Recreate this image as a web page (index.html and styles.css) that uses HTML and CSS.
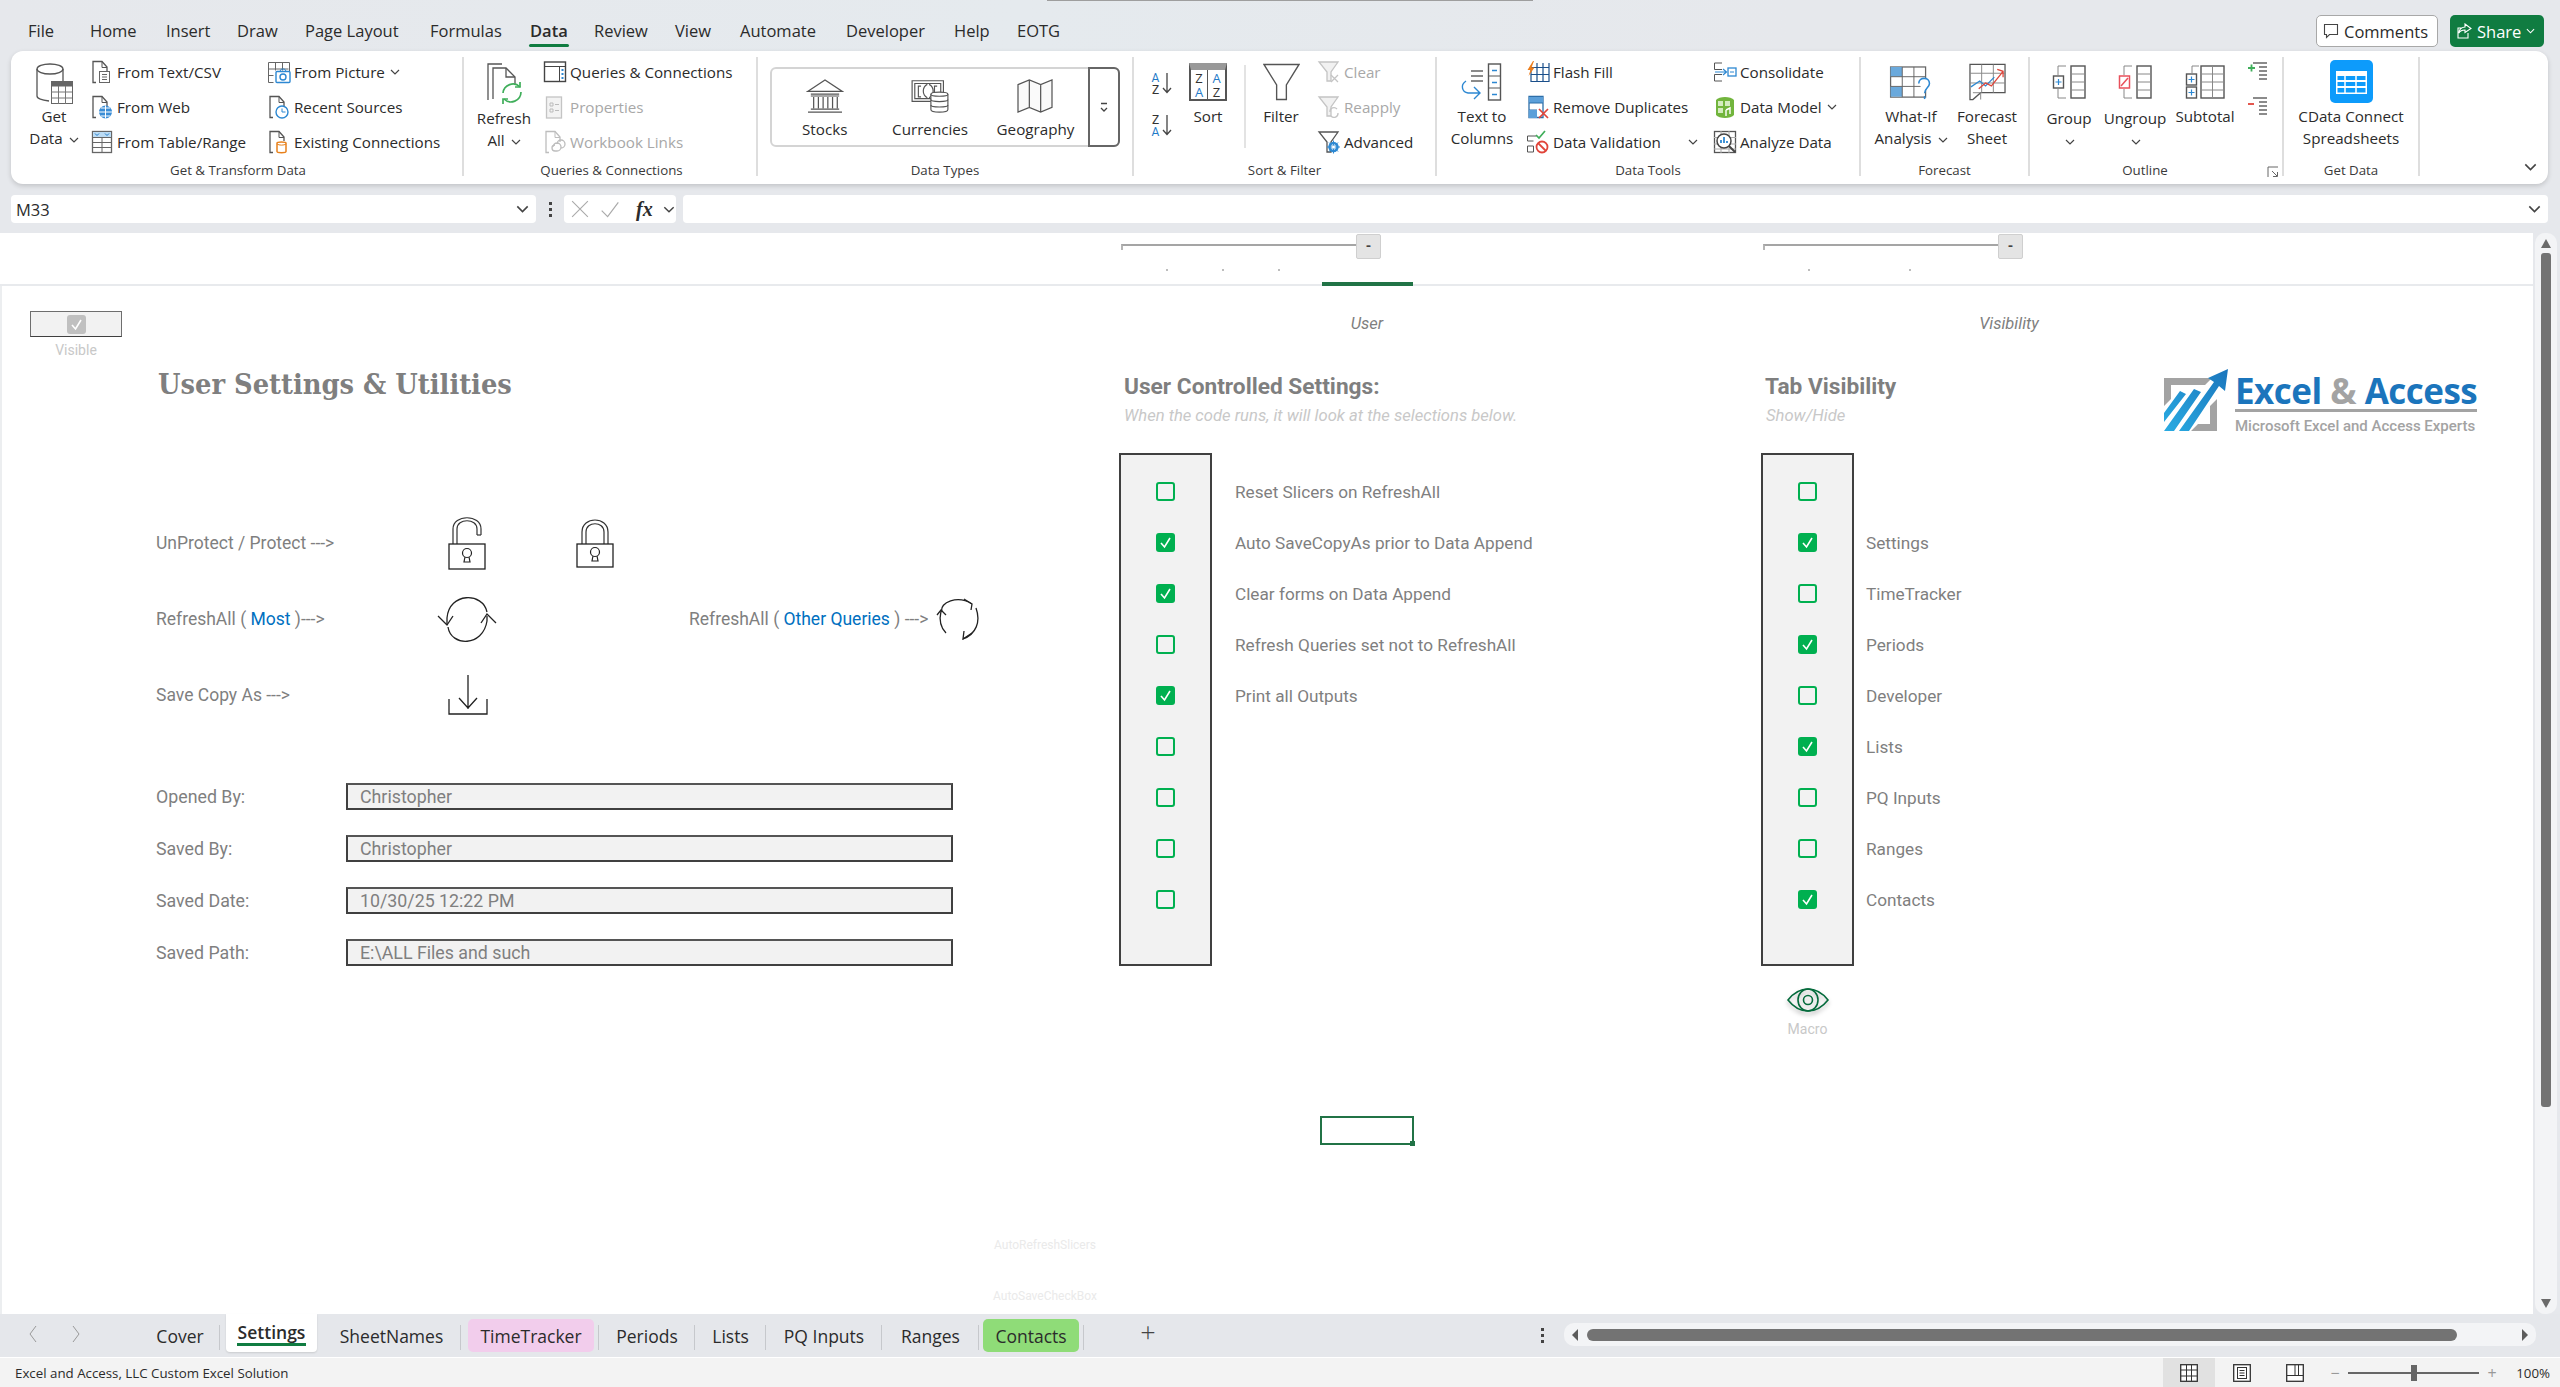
FILE: index.html
```html
<!DOCTYPE html>
<html lang="en">
<head>
<meta charset="utf-8">
<title>Excel - User Settings &amp; Utilities</title>
<link rel="stylesheet" href="styles.css">
</head>
<body>
<svg class="defs" aria-hidden="true">
  <symbol id="chev" viewBox="0 0 10 6"><path d="M1 1l4 4 4-4" fill="none" stroke="#444" stroke-width="1.2"/></symbol>
  <symbol id="chev-w" viewBox="0 0 10 6"><path d="M1 1l4 4 4-4" fill="none" stroke="#fff" stroke-width="1.2"/></symbol>
  <symbol id="db" viewBox="0 0 37 41"><g fill="none" stroke="#555" stroke-width="1.3"><ellipse cx="14" cy="6" rx="13" ry="5" fill="#fff"/><path d="M1 6v27c0 3 5 4 12 5M27 6v12"/></g><rect x="15.5" y="18.5" width="21" height="22" fill="#fff" stroke="#666"/><rect x="15.5" y="18.5" width="21" height="5" fill="#666"/><path d="M15 29h21M15 35h21M22.5 23v18M29.5 23v18" stroke="#777" fill="none"/></symbol>
  <symbol id="doc-text" viewBox="0 0 24 24"><path d="M6 22.5H3V1.500h9l5 5.500v4" fill="none" stroke="#555" stroke-width="1.3"/><path d="M12 1.500v6h5" fill="none" stroke="#555"/><rect x="9.500" y="11.500" width="10" height="11" fill="#fff" stroke="#666"/><path d="M12 14.500h5M12 17h5M12 19.500h5" stroke="#666"/></symbol>
  <symbol id="doc-web" viewBox="0 0 24 24"><path d="M6 22.5H3V1.500h9l5 5.500v4" fill="none" stroke="#555" stroke-width="1.3"/><path d="M12 1.500v6h5" fill="none" stroke="#555"/><circle cx="15.500" cy="17" r="6.500" fill="#3a8dd6"/><path d="M9 17h13M15.500 10.500v13M11 13h9M11 21h9" stroke="#fff" fill="none"/></symbol>
  <symbol id="tbl" viewBox="0 0 24 24"><rect x="2.500" y="1.500" width="19" height="21" fill="#fff" stroke="#666" stroke-width="1.3"/><rect x="3" y="2" width="18" height="5" fill="#bcdcf5"/><path d="M5 3.500l2 2 2-2M15 3.500l2 2 2-2" stroke="#1f7ac8" fill="none"/><path d="M3 7.500h18M3 12.500h18M3 17.500h18M12 7v15" stroke="#666" fill="none"/></symbol>
  <symbol id="pic" viewBox="0 0 24 24"><path d="M1.500 2.500h21v9M1.500 2.500v20h5M8.500 2.500v8M15.500 2.500v8M1.500 9h20M1.500 15.500h5" fill="none" stroke="#666"/><rect x="9" y="11.500" width="14" height="11" rx="1" fill="#fff" stroke="#2d88d2" stroke-width="1.4"/><circle cx="16" cy="17" r="3" fill="none" stroke="#2d88d2" stroke-width="1.4"/><path d="M13 11l1.500-2h3l1.500 2" fill="none" stroke="#2d88d2"/></symbol>
  <symbol id="recent" viewBox="0 0 24 24"><path d="M6 22.5H3V1.500h9l5 5.500v4" fill="none" stroke="#555" stroke-width="1.3"/><path d="M12 1.500v6h5" fill="none" stroke="#555"/><circle cx="15" cy="17" r="6" fill="#fff" stroke="#2d88d2" stroke-width="1.4"/><path d="M15 13.500V17h3.500" fill="none" stroke="#2d88d2"/></symbol>
  <symbol id="exist" viewBox="0 0 24 24"><path d="M6 22.5H3V1.500h9l5 5.500v4" fill="none" stroke="#555" stroke-width="1.3"/><path d="M12 1.500v6h5" fill="none" stroke="#555"/><path d="M10 13c0-1.500 9-1.500 9 0v8.500c0 1.500-9 1.500-9 0z" fill="#fff" stroke="#e8801a" stroke-width="1.5"/><path d="M10 14c2 1.500 7 1.500 9 0" fill="none" stroke="#e8801a"/></symbol>
  <symbol id="refresh-big" viewBox="0 0 37 41"><g fill="none" stroke="#555" stroke-width="1.3"><path d="M2 37V1h14"/><path d="M7 36V5h13l9 9v7"/><path d="M20 5v9h9"/></g><g fill="none" stroke="#3fae5a" stroke-width="1.7"><path d="M17 30a10 10 0 0 1 17-6"/><path d="M35 29a10 10 0 0 1-17 7"/><path d="M29 24h5v-5"/><path d="M22 36h-5v5"/></g></symbol>
  <symbol id="qc" viewBox="0 0 24 24"><rect x="1.500" y="2" width="21" height="19.500" fill="#fff" stroke="#444" stroke-width="1.4"/><path d="M1 6.500h22M16.500 7v14" stroke="#444" fill="none"/><path d="M19.500 9v10" stroke="#2d88d2" stroke-width="2" stroke-dasharray="2 2" fill="none"/></symbol>
  <symbol id="props" viewBox="0 0 24 24"><rect x="3.500" y="2" width="15" height="21" fill="#f3f3f3" stroke="#c4c4c4" stroke-width="1.3"/><path d="M7 8h3v3H7zM7 14h3v3H7zM12 9.500h4M12 15.500h4" fill="none" stroke="#bbb"/></symbol>
  <symbol id="links" viewBox="0 0 24 24"><path d="M6 22.5H3V1.500h9l5 5.500v5" fill="none" stroke="#bdbdbd" stroke-width="1.3"/><path d="M12 1.500v6h5" fill="none" stroke="#bdbdbd"/><path d="M10 17a4 4 0 1 1 4 4h-2a3 3 0 0 1 0-6M14 14a4 4 0 1 1 4 4" fill="none" stroke="#bdbdbd" stroke-width="1.3"/></symbol>
  <symbol id="stocks" viewBox="0 0 38 36"><g fill="none" stroke="#555" stroke-width="1.3"><path d="M1 13L19 1l18 12zM4 16h30M4 18h30M7 19v12M12 19v12M17 19v12M22 19v12M27 19v12M32 19v12M4 32h30M1 35h36"/></g></symbol>
  <symbol id="curr" viewBox="0 0 42 38"><g fill="none" stroke="#555" stroke-width="1.3"><path d="M1 2h35v23H1zM4 5h29v17H4z"/><path d="M11 8H8v12h3M29 8h-3v12h3M18 6c-6 3-6 12 0 15M20 6c6 3 6 12 0 15"/></g><path d="M22 17c0-3 19-3 19 0v17c0 4-19 4-19 0z" fill="#fff" stroke="#555" stroke-width="1.3"/><path d="M22 17c0 3 19 3 19 0M22 23c0 3 19 3 19 0M22 29c0 3 19 3 19 0" fill="none" stroke="#555" stroke-width="1.3"/></symbol>
  <symbol id="geo" viewBox="0 0 38 36"><path d="M1 6l12-5 12 5 12-5v29l-12 5-12-5-12 5zM13 1v29M25 6v29" fill="#fafafa" stroke="#555" stroke-width="1.3"/></symbol>
  <symbol id="down" viewBox="0 0 12 14"><path d="M3 3.500h6M3 8l3 3 3-3" fill="none" stroke="#444" stroke-width="1.3"/></symbol>
  <symbol id="arrowd" viewBox="0 0 10 22"><path d="M5 1v19M1 16l4 4.500L9 16" fill="none" stroke="#444" stroke-width="1.3"/></symbol>
  <symbol id="filter" viewBox="0 0 38 38"><path d="M1 1h36L24 22v15H14V22z" fill="#fff" stroke="#555" stroke-width="1.4"/></symbol>
  <symbol id="f-clear" viewBox="0 0 24 24"><path d="M2 2h19l-7 10v9h-4v-9z" fill="#f1f1f1" stroke="#c4c4c4" stroke-width="1.3"/><path d="M14 15l7 7M21 15l-7 7" stroke="#c4c4c4" stroke-width="1.3"/></symbol>
  <symbol id="f-reapply" viewBox="0 0 24 24"><path d="M2 2h19l-7 10v9h-4v-9z" fill="#f1f1f1" stroke="#c4c4c4" stroke-width="1.3"/><path d="M13 17a4 4 0 0 1 7-3M21 18a4 4 0 0 1-7 3" fill="none" stroke="#c4c4c4" stroke-width="1.3"/></symbol>
  <symbol id="f-adv" viewBox="0 0 24 24"><path d="M2 2h19l-7 10v10h-4V12z" fill="#fff" stroke="#555" stroke-width="1.3"/><circle cx="16.500" cy="17" r="4" fill="#fff" stroke="#2d88d2" stroke-width="2.5"/><path d="M16.500 10.500v13M10 17h13M12 12.500l9 9M21 12.500l-9 9" stroke="#2d88d2"/><circle cx="16.500" cy="17" r="1.500" fill="#fff"/></symbol>
  <symbol id="t2c" viewBox="0 0 44 38"><rect x="28.500" y="1" width="12" height="36" fill="#fff" stroke="#555" stroke-width="1.4"/><path d="M28 13h13M28 25h13" stroke="#555"/><path d="M32 7.500h5M32 19.500h5M32 31.500h5" stroke="#2d88d2" stroke-width="1.4"/><path d="M11 8h12M11 13h12M11 18h12" stroke="#666" stroke-width="1.3"/><path d="M6 18c-6 4-4 11 2 12h12M14 24l6 6-6 6" fill="none" stroke="#2d88d2" stroke-width="1.4"/></symbol>
  <symbol id="flash" viewBox="0 0 24 24"><path d="M5 7.500h18v14H5zM5 14.500h18M11 3v19M17 3v19M23 3v5" fill="none" stroke="#1a4f8a" stroke-width="1.2"/><path d="M7 1L1.500 10h3l-2 6 6-8.500h-3L8 1z" fill="#ed7d1a"/></symbol>
  <symbol id="dup" viewBox="0 0 24 24"><path d="M3 1.500h14v21H3z" fill="#fff" stroke="#2d6ea8" stroke-width="1.3"/><rect x="3" y="2" width="14" height="6" fill="#5b9fd9"/><path d="M3 8h14M3 15h8" stroke="#2d6ea8"/><rect x="3" y="15" width="8" height="8" fill="#5b9fd9"/><path d="M13 14l9 9M22 14l-9 9" stroke="#e0453a" stroke-width="1.7"/></symbol>
  <symbol id="valid" viewBox="0 0 24 24"><path d="M1.500 6h9M1.500 6v5h6M1.500 16h6v6h-6z" fill="none" stroke="#555"/><path d="M10 5l3 3 6-7" fill="none" stroke="#3fae5a" stroke-width="1.7"/><circle cx="16" cy="17" r="5.500" fill="#fff" stroke="#e0453a" stroke-width="1.8"/><path d="M12 13l8 8" stroke="#e0453a" stroke-width="1.8"/></symbol>
  <symbol id="cons" viewBox="0 0 24 24"><path d="M9 3H1.500v6.500H9M9 14.500H1.500V21H9" fill="none" stroke="#555"/><path d="M2 12h11M10 9l3.500 3-3.500 3" fill="none" stroke="#2d88d2" stroke-width="1.2"/><rect x="15" y="8" width="8" height="8" fill="#fff" stroke="#2d88d2" stroke-width="1.3"/><path d="M17 12h4" stroke="#2d88d2"/></symbol>
  <symbol id="model" viewBox="0 0 24 24"><path d="M3 5c3-4 15-4 18 0v15c-3 4-15 4-18 0z" fill="#72b53d"/><path d="M5 6h5v5H5zM12 6h5v5h-5zM5 13h5v5H5z" fill="#d4ecc0"/><path d="M13 15l4-2v6m-4-4v6" stroke="#fff" fill="none" stroke-width="1.4"/></symbol>
  <symbol id="analyze" viewBox="0 0 24 24"><rect x="1.500" y="1.500" width="21" height="21" fill="#fff" stroke="#555" stroke-width="1.3"/><path d="M1 7.500h22M1 14h22M1 19h22M8 1v22M16 1v22" stroke="#aaa"/><circle cx="11" cy="11" r="7" fill="#fff" stroke="#444" stroke-width="1.5"/><path d="M8 13V10M11 13V7M14 13v-2" stroke="#2d88d2" stroke-width="1.8"/><path d="M16 16l6 6" stroke="#444" stroke-width="2"/></symbol>
  <symbol id="whatif" viewBox="0 0 44 36"><rect x="1" y="1" width="36" height="31" fill="#fff" stroke="#666" stroke-width="1.3"/><rect x="1" y="1" width="12" height="10" fill="#6aa9dc"/><rect x="1" y="21" width="12" height="10.500" fill="#6aa9dc"/><path d="M1 11h36M1 21h36M13 1v31M25 1v31" stroke="#666" fill="none"/><path d="M30 18c0-7 11-7 11 0 0 4-5 5-5 10" fill="#fff" stroke="#2d88d2" stroke-width="1.6"/><path d="M36 31v3" stroke="#2d88d2" stroke-width="1.6"/></symbol>
  <symbol id="fsheet" viewBox="0 0 38 38"><path d="M1 1h36v29H12l-8 7H1z" fill="#fff" stroke="#555" stroke-width="1.3"/><path d="M1 10h36M1 20h36M13 1v29M25 1v29M4 30h8v7" stroke="#888" fill="none"/><path d="M2 24l9-6 6 5 9-9" fill="none" stroke="#2d88d2" stroke-width="1.3"/><path d="M10 26l7-6 6 3 12-15M29 6l6 2v6" fill="none" stroke="#e0453a" stroke-width="1.3"/></symbol>
  <symbol id="grp" viewBox="0 0 34 34"><path d="M6 10V1h8M6 24v9h8" fill="none" stroke="#888"/><rect x="1.500" y="11" width="10" height="12" fill="#fff" stroke="#555" stroke-width="1.4"/><path d="M3.500 17h6M6.500 14v6" stroke="#2d88d2" stroke-width="1.2"/><rect x="19" y="1" width="14" height="32" fill="#fff" stroke="#555" stroke-width="1.4"/><path d="M19 9h14M19 17h14M19 25h14" stroke="#888"/></symbol>
  <symbol id="ungrp" viewBox="0 0 34 34"><path d="M6 10V1h8M6 24v9h8" fill="none" stroke="#888"/><rect x="1.500" y="11" width="10" height="12" fill="#fff" stroke="#e8505b" stroke-width="1.5"/><path d="M3 21l7-8" stroke="#e8505b" stroke-width="1.5"/><rect x="19" y="1" width="14" height="32" fill="#fff" stroke="#555" stroke-width="1.4"/><path d="M19 9h14M19 17h14M19 25h14" stroke="#888"/></symbol>
  <symbol id="subt" viewBox="0 0 40 34"><path d="M7 8V1h7" fill="none" stroke="#888"/><rect x="1.500" y="9" width="10" height="11" fill="#fff" stroke="#555" stroke-width="1.4"/><rect x="1.500" y="22" width="10" height="11" fill="#fff" stroke="#555" stroke-width="1.4"/><path d="M3.500 14.500h6M6.500 11.500v6M3.500 27.500h6M6.500 24.500v6" stroke="#2d88d2" stroke-width="1.2"/><rect x="16" y="1" width="23" height="32" fill="#fff" stroke="#555" stroke-width="1.4"/><path d="M16 9h23M16 17h23M16 25h23M27.500 1v32" stroke="#888"/></symbol>
  <symbol id="show" viewBox="0 0 24 24"><path d="M7 3h14M13 7h8M13 11h8M13 15h8M13 19h8" stroke="#666" stroke-width="1.4" fill="none"/><path d="M2 8h7M5.500 4.500v7" stroke="#3fae5a" stroke-width="1.8"/></symbol>
  <symbol id="hide" viewBox="0 0 24 24"><path d="M7 3h14M13 7h8M13 11h8M13 15h8M13 19h8" stroke="#666" stroke-width="1.4" fill="none"/><path d="M2 9h6" stroke="#e0453a" stroke-width="1.8"/></symbol>
  <symbol id="launch" viewBox="0 0 12 12"><path d="M1 11V1h10M5 5l5 5M6 10.500h4.500V6" fill="none" stroke="#666"/></symbol>
  <symbol id="cdata" viewBox="0 0 43 43"><rect width="43" height="43" rx="5" fill="#0d9bfb"/><rect x="6" y="11" width="31" height="23" fill="#fff"/><path d="M7.500 16h28v4h-28zM7.500 22h28v4h-28zM7.500 28h28v4.500h-28z" fill="#0d9bfb"/><path d="M15 11v23M26 11v23" stroke="#fff" stroke-width="1.5"/></symbol>
  <symbol id="lock-open" viewBox="0 0 38 53"><path d="M5 27V12C5 -3 33 -3 33 12v6M9 27V12C9 1 29 1 29 12v6" fill="none" stroke="#333" stroke-width="1.2"/><path d="M29 18h4" stroke="#333" stroke-width="1.2"/><rect x="1" y="27" width="36" height="25" fill="#fff" stroke="#222" stroke-width="1.3"/><circle cx="19" cy="36" r="4.500" fill="none" stroke="#222" stroke-width="1.2"/><path d="M17 40l-1 5h6l-1-5" fill="none" stroke="#222" stroke-width="1.2"/></symbol>
  <symbol id="lock-closed" viewBox="0 0 38 49"><path d="M6 25V13C6 -3 32 -3 32 13v12M10 25V13C10 2 28 2 28 13v12" fill="none" stroke="#333" stroke-width="1.2"/><rect x="1" y="25" width="36" height="23" fill="#fff" stroke="#222" stroke-width="1.3"/><circle cx="19" cy="33" r="4.500" fill="none" stroke="#222" stroke-width="1.2"/><path d="M17 37l-1 5h6l-1-5" fill="none" stroke="#222" stroke-width="1.2"/></symbol>
  <symbol id="sync-a" viewBox="0 0 60 45"><g fill="none" stroke="#222" stroke-width="1.3"><path d="M10 27V21C12 -5 46 -5 50 15"/><path d="M50 19v5C46 50 14 50 11 30"/><path d="M1 19l9 9 6-9M44 26l6-9 9 9"/></g></symbol>
  <symbol id="sync-b" viewBox="0 0 43 42"><g fill="none" stroke="#222" stroke-width="1.3"><path d="M6 14C3 4 22 -3 36 6"/><path d="M28 1l8 5-1 6"/><path d="M5 13C3 22 5 30 10 35"/><path d="M1 17l4-5 5 5"/><path d="M40 10c5 14 0 26-13 31"/><path d="M36 35l-9 6 1-8"/></g></symbol>
  <symbol id="save" viewBox="0 0 40 40"><path d="M20 0v34M11 23l9 10 9-10M1 24v15h38V24" fill="none" stroke="#222" stroke-width="1.3"/></symbol>
  <symbol id="eye" viewBox="0 0 42 24"><g fill="none" stroke="#056b3c" stroke-width="1.6"><path d="M1 12C8 3 15 1 21 1s13 2 20 11c-7 9-14 11-20 11S8 21 1 12z"/><ellipse cx="21" cy="12" rx="10" ry="11"/><circle cx="21" cy="12" r="4.500"/></g></symbol>
  <symbol id="tick" viewBox="0 0 19 19"><path d="M5 10l3.500 4L14 5" fill="none" stroke="#fff" stroke-width="1.6"/></symbol>
  <symbol id="logo-mark" viewBox="0 0 64 62"><defs><linearGradient id="lg" x1="0" y1="1" x2="1" y2="0"><stop offset="0" stop-color="#29abe2"/><stop offset="1" stop-color="#1b75bc"/></linearGradient></defs><path d="M0 9h48l-7 7H7v14l-7 7zM53 30v32H27l7-7h12V37z" fill="#a3a3a3"/><path d="M0 44l16-22 6 3L0 53zM0 62L30 20l7 3L10 62zM15 62L50 13l-6-4 20-9-3 22-6-5L25 62z" fill="url(#lg)"/></symbol>
  <symbol id="normal" viewBox="0 0 18 18"><rect x=".7" y=".7" width="16.600" height="16.600" fill="#fff" stroke="#333" stroke-width="1.3"/><path d="M1 6h16M1 12h16M6.500 1v16M11.500 1v16" stroke="#333"/></symbol>
  <symbol id="pagev" viewBox="0 0 18 18"><rect x=".7" y=".7" width="16.600" height="16.600" fill="#fff" stroke="#333" stroke-width="1.3"/><rect x="4.500" y="3.500" width="9" height="11" fill="none" stroke="#333"/><path d="M6.500 6.500h5M6.500 9h5M6.500 11.500h5" stroke="#333"/></symbol>
  <symbol id="breakv" viewBox="0 0 18 18"><rect x=".7" y=".7" width="16.600" height="16.600" fill="#fff" stroke="#333" stroke-width="1.3"/><path d="M1 11.500h16M9 1v10.500M12.500 1v10.500" stroke="#333"/></symbol>
</svg>

<div class="app">
  <header class="top">
    <div class="search-edge"></div>
    <nav class="menu">
      <span>File</span><span>Home</span><span>Insert</span><span>Draw</span><span>Page Layout</span><span>Formulas</span><span class="on">Data</span><span>Review</span><span>View</span><span>Automate</span><span>Developer</span><span>Help</span><span>EOTG</span>
    </nav>
    <div class="actions">
      <div class="btn-comments"><svg class="bubble" viewBox="0 0 16 16"><path d="M1.500 1.500h13v10h-8l-3 3v-3h-2z" fill="none" stroke="#444" stroke-width="1.1"/></svg>Comments</div>
      <div class="btn-share"><svg class="bubble" viewBox="0 0 16 16"><path d="M9 1l6 4.500L9 9.500V7c-3 0-5 1-6 3 0-3 2-5.500 6-6zM12 10v5H2V5h4" fill="none" stroke="#fff" stroke-width="1.1"/></svg>Share<svg class="chev-s"><use href="#chev-w"/></svg></div>
    </div>
  </header>

  <section class="ribbon">
    <div class="group g1">
      <div class="gbody">
        <div class="big w50"><svg class="bi w37"><use href="#db"/></svg><span>Get</span><span>Data <svg class="cv"><use href="#chev"/></svg></span></div>
        <div class="smalls c177 ml11">
          <div class="si"><svg class="ic"><use href="#doc-text"/></svg>From Text/CSV</div>
          <div class="si"><svg class="ic"><use href="#doc-web"/></svg>From Web</div>
          <div class="si"><svg class="ic"><use href="#tbl"/></svg>From Table/Range</div>
        </div>
        <div class="smalls">
          <div class="si"><svg class="ic"><use href="#pic"/></svg>From Picture <svg class="cv"><use href="#chev"/></svg></div>
          <div class="si"><svg class="ic"><use href="#recent"/></svg>Recent Sources</div>
          <div class="si"><svg class="ic"><use href="#exist"/></svg>Existing Connections</div>
        </div>
      </div>
      <div class="glabel">Get &amp; Transform Data</div>
    </div>

    <div class="group g2">
      <div class="gbody">
        <div class="big w60 lo"><svg class="bi w37"><use href="#refresh-big"/></svg><span>Refresh</span><span>All <svg class="cv"><use href="#chev"/></svg></span></div>
        <div class="smalls ml9">
          <div class="si"><svg class="ic"><use href="#qc"/></svg>Queries &amp; Connections</div>
          <div class="si off"><svg class="ic"><use href="#props"/></svg>Properties</div>
          <div class="si off"><svg class="ic"><use href="#links"/></svg>Workbook Links</div>
        </div>
      </div>
      <div class="glabel">Queries &amp; Connections</div>
    </div>

    <div class="group g3">
      <div class="gbody">
        <div class="dtypes">
          <div class="dt"><svg class="dti w38"><use href="#stocks"/></svg>Stocks</div>
          <div class="dt"><svg class="dti w42"><use href="#curr"/></svg>Currencies</div>
          <div class="dt"><svg class="dti w38"><use href="#geo"/></svg>Geography</div>
          <div class="dt-more"><svg class="down"><use href="#down"/></svg></div>
        </div>
      </div>
      <div class="glabel">Data Types</div>
    </div>

    <div class="group g4">
      <div class="gbody">
        <div class="azs">
          <div class="az"><span class="azl"><b>A</b><i>Z</i></span><svg class="arrowd"><use href="#arrowd"/></svg></div>
          <div class="az"><span class="azl"><i>Z</i><b>A</b></span><svg class="arrowd"><use href="#arrowd"/></svg></div>
        </div>
        <div class="big w60 ml5">
          <div class="sorticon"><span class="sc"><i>Z</i><b>A</b></span><span class="sc"><b>A</b><i>Z</i></span></div>
          <span>Sort</span>
        </div>
        <div class="vsep"></div>
        <div class="big w60 ml5"><svg class="bi w37"><use href="#filter"/></svg><span>Filter</span></div>
        <div class="smalls ml6">
          <div class="si off"><svg class="ic"><use href="#f-clear"/></svg>Clear</div>
          <div class="si off"><svg class="ic"><use href="#f-reapply"/></svg>Reapply</div>
          <div class="si"><svg class="ic"><use href="#f-adv"/></svg>Advanced</div>
        </div>
      </div>
      <div class="glabel">Sort &amp; Filter</div>
    </div>

    <div class="group g5">
      <div class="gbody">
        <div class="big w76"><svg class="bi w44"><use href="#t2c"/></svg><span>Text to</span><span>Columns</span></div>
        <div class="smalls c187 ml6">
          <div class="si"><svg class="ic"><use href="#flash"/></svg>Flash Fill</div>
          <div class="si"><svg class="ic"><use href="#dup"/></svg>Remove Duplicates</div>
          <div class="si"><svg class="ic"><use href="#valid"/></svg>Data Validation<svg class="cv ml24"><use href="#chev"/></svg></div>
        </div>
        <div class="smalls">
          <div class="si"><svg class="ic"><use href="#cons"/></svg>Consolidate</div>
          <div class="si"><svg class="ic"><use href="#model"/></svg>Data Model <svg class="cv"><use href="#chev"/></svg></div>
          <div class="si"><svg class="ic"><use href="#analyze"/></svg>Analyze Data</div>
        </div>
      </div>
      <div class="glabel">Data Tools</div>
    </div>

    <div class="group g6">
      <div class="gbody">
        <div class="big w76"><svg class="bi w44 t3"><use href="#whatif"/></svg><span>What-If</span><span>Analysis <svg class="cv"><use href="#chev"/></svg></span></div>
        <div class="big w76"><svg class="bi w37"><use href="#fsheet"/></svg><span>Forecast</span><span>Sheet</span></div>
      </div>
      <div class="glabel">Forecast</div>
    </div>

    <div class="group g7">
      <div class="gbody">
        <div class="big w66 lo"><svg class="bi w34"><use href="#grp"/></svg><span>Group</span><span><svg class="cv"><use href="#chev"/></svg></span></div>
        <div class="big w66 lo"><svg class="bi w34"><use href="#ungrp"/></svg><span>Ungroup</span><span><svg class="cv"><use href="#chev"/></svg></span></div>
        <div class="big w74"><svg class="bi w40"><use href="#subt"/></svg><span>Subtotal</span></div>
        <div class="smalls ml4">
          <div class="si"><svg class="ic"><use href="#show"/></svg></div>
          <div class="si"><svg class="ic"><use href="#hide"/></svg></div>
        </div>
      </div>
      <div class="glabel gl-outline">Outline<svg class="launch"><use href="#launch"/></svg></div>
    </div>

    <div class="group g8">
      <div class="gbody">
        <div class="big full"><svg class="bi w43"><use href="#cdata"/></svg><span>CData Connect</span><span>Spreadsheets</span></div>
      </div>
      <div class="glabel">Get Data</div>
    </div>

    <svg class="collapse"><use href="#chev"/></svg>
  </section>

  <section class="fbar">
    <div class="namebox">M33<svg class="nbc"><use href="#chev"/></svg></div>
    <div class="dots"><i></i><i></i><i></i></div>
    <div class="fxbox">
      <svg class="fx-x" viewBox="0 0 16 16"><path d="M1 1l14 14M15 1L1 15" stroke="#aaa" fill="none"/></svg>
      <svg class="fx-c" viewBox="0 0 16 16"><path d="M1 9l5 5 9-12" stroke="#aaa" fill="none"/></svg>
      <span class="fx">fx</span><svg class="nbc2"><use href="#chev"/></svg>
    </div>
    <div class="finput"><svg class="nbc"><use href="#chev"/></svg></div>
  </section>

  <section class="work">
    <main class="sheet">
      <div class="band">
        <div class="band-col bc1">
          <div class="slicer"><div class="sl-line"></div><div class="sl-handle">-</div></div>
          <div class="ticks t3v"><i></i><i></i><i></i></div>
        </div>
        <div class="band-col bc2">
          <div class="slicer"><div class="sl-line"></div><div class="sl-handle">-</div></div>
          <div class="ticks t2v"><i></i><i></i></div>
        </div>
        <div class="greenbar"></div>
      </div>

      <div class="cols">
        <div class="col-left">
          <div class="visible">
            <div class="vis-box"><span class="vis-check"><svg class="tick"><use href="#tick"/></svg></span></div>
            <div class="vis-label">Visible</div>
          </div>
          <h1 class="title">User Settings &amp; Utilities</h1>
          <div class="actions-grid">
            <div class="txt">UnProtect / Protect ---&gt;</div>
            <svg class="lk lk-o"><use href="#lock-open"/></svg>
            <svg class="lk lk-c"><use href="#lock-closed"/></svg>
            <div></div><div></div>
            <div class="txt">RefreshAll ( <span class="blue">Most</span> )---&gt;</div>
            <svg class="sy-a"><use href="#sync-a"/></svg>
            <div></div>
            <div class="txt">RefreshAll ( <span class="blue">Other Queries</span> ) ---&gt;</div>
            <svg class="sy-b"><use href="#sync-b"/></svg>
            <div class="txt">Save Copy As ---&gt;</div>
            <svg class="sv"><use href="#save"/></svg>
          </div>
          <div class="form">
            <div class="txt">Opened By:</div><div class="field">Christopher</div>
            <div class="txt">Saved By:</div><div class="field">Christopher</div>
            <div class="txt">Saved Date:</div><div class="field">10/30/25 12:22 PM</div>
            <div class="txt">Saved Path:</div><div class="field">E:\ALL Files and such</div>
          </div>
        </div>

        <div class="col-mid">
          <div class="col-cap cap-user">User</div>
          <h2 class="heading">User Controlled Settings:</h2>
          <div class="sub">When the code runs, it will look at the selections below.</div>
          <div class="list">
            <div class="panel">
              <span class="cb"></span><span class="cb on"><svg class="tick"><use href="#tick"/></svg></span><span class="cb on"><svg class="tick"><use href="#tick"/></svg></span><span class="cb"></span><span class="cb on"><svg class="tick"><use href="#tick"/></svg></span><span class="cb"></span><span class="cb"></span><span class="cb"></span><span class="cb"></span>
            </div>
            <div class="labels">
              <div>Reset Slicers on RefreshAll</div>
              <div>Auto SaveCopyAs prior to Data Append</div>
              <div>Clear forms on Data Append</div>
              <div>Refresh Queries set not to RefreshAll</div>
              <div>Print all Outputs</div>
            </div>
          </div>
        </div>

        <div class="col-right">
          <div class="col-right-main">
            <div class="col-cap cap-vis">Visibility</div>
            <h2 class="heading">Tab Visibility</h2>
            <div class="sub">Show/Hide</div>
            <div class="list">
              <div class="panel">
                <span class="cb"></span><span class="cb on"><svg class="tick"><use href="#tick"/></svg></span><span class="cb"></span><span class="cb on"><svg class="tick"><use href="#tick"/></svg></span><span class="cb"></span><span class="cb on"><svg class="tick"><use href="#tick"/></svg></span><span class="cb"></span><span class="cb"></span><span class="cb on"><svg class="tick"><use href="#tick"/></svg></span>
              </div>
              <div class="labels lr">
                <div></div>
                <div>Settings</div>
                <div>TimeTracker</div>
                <div>Periods</div>
                <div>Developer</div>
                <div>Lists</div>
                <div>PQ Inputs</div>
                <div>Ranges</div>
                <div>Contacts</div>
              </div>
            </div>
            <div class="macro">
              <svg class="eye"><use href="#eye"/></svg>
              <div class="macro-label">Macro</div>
            </div>
          </div>
          <div class="logo">
            <svg class="logo-mark"><use href="#logo-mark"/></svg>
            <div class="logo-text">
              <div class="logo-name">Excel <span class="amp">&amp;</span> Access</div>
              <div class="logo-sub">Microsoft Excel and Access Experts</div>
            </div>
          </div>
        </div>
      </div>

      <div class="active-cell"></div>
      <div class="faint f1">AutoRefreshSlicers</div>
      <div class="faint f2">AutoSaveCheckBox</div>
    </main>

    <aside class="vscroll">
      <span class="varrow up"></span>
      <div class="vthumb"></div>
      <span class="varrow dn"></span>
    </aside>
  </section>

  <section class="tabbar">
    <div class="tabnav">
      <svg class="nav" viewBox="0 0 10 18"><path d="M8 1L2 9l6 8" fill="none" stroke="#999"/></svg>
      <svg class="nav" viewBox="0 0 10 18"><path d="M2 1l6 8-6 8" fill="none" stroke="#999"/></svg>
    </div>
    <div class="tabs">
      <div class="stab">Cover</div>
      <div class="stab sel"><span class="seltext">Settings</span></div>
      <div class="stab">SheetNames</div>
      <div class="stab"><span class="chip pink">TimeTracker</span></div>
      <div class="stab">Periods</div>
      <div class="stab">Lists</div>
      <div class="stab">PQ Inputs</div>
      <div class="stab">Ranges</div>
      <div class="stab"><span class="chip green">Contacts</span></div>
    </div>
    <div class="plus">+</div>
    <div class="dots dots-h"><i></i><i></i><i></i></div>
    <div class="hscroll">
      <span class="harrow l"></span>
      <div class="hthumb"></div>
      <span class="harrow r"></span>
    </div>
  </section>

  <footer class="status">
    <div class="status-text">Excel and Access, LLC Custom Excel Solution</div>
    <div class="status-right">
      <div class="view on"><svg class="vw"><use href="#normal"/></svg></div>
      <div class="view"><svg class="vw"><use href="#pagev"/></svg></div>
      <div class="view"><svg class="vw"><use href="#breakv"/></svg></div>
      <span class="zm">−</span>
      <div class="zoomline"><i></i></div>
      <span class="zm p">+</span>
      <span class="zpct">100%</span>
    </div>
  </footer>
</div>
</body>
</html>
```
FILE: styles.css
```css
* { box-sizing: border-box; }
html, body { margin: 0; padding: 0; height: 100%; overflow: hidden; }
body { font-family: "Open Sans", "Noto Sans", sans-serif; color: #2b2b2b; background: #e6e8ec; }
.defs { position: absolute; width: 0; height: 0; }
.app { width: 2560px; height: 1387px; display: flex; flex-direction: column; }

/* top menu */
.top { height: 51px; flex: none; display: flex; align-items: flex-start; justify-content: space-between; position: relative; background: linear-gradient(90deg, #e6e8ec, #e5eaee 40%, #e6e8ec 70%); }
.search-edge { position: absolute; left: 1047px; top: 0; width: 486px; height: 1px; background: #9e9e9e; }
.menu { display: grid; grid-template-columns: 62px 76px 71px 68px 125px 100px 64px 81px 65px 106px 108px 63px auto; margin: 19px 0 0 28px; font-size: 16.5px; line-height: 24px; }
.menu span { position: relative; white-space: nowrap; }
.menu .on { font-weight: 600; }
.menu .on::after { content: ""; position: absolute; left: -1px; top: 25px; width: 40px; height: 3px; background: #107c41; border-radius: 2px; }
.actions { display: flex; gap: 12px; margin: 15px 16px 0 0; font-size: 16.5px; }
.btn-comments, .btn-share { display: flex; align-items: center; height: 32px; border-radius: 5px; white-space: nowrap; }
.btn-comments { width: 122px; padding-left: 6px; background: #fff; border: 1px solid #a8a8a8; gap: 5px; }
.btn-share { width: 94px; padding-left: 6px; background: #107c41; color: #fff; gap: 5px; }
.bubble { width: 16px; height: 16px; flex: none; }
.chev-s { width: 9px; height: 6px; }

/* ribbon */
.ribbon { height: 133px; flex: none; margin: 0 12px 0 11px; padding-top: 6px; background: #fff; border-radius: 12px; box-shadow: 0 2px 5px rgba(0,0,0,.16); display: flex; position: relative; font-size: 15.2px; }
.group { flex: none; height: 119px; border-right: 2px solid #dedede; display: flex; flex-direction: column; }
.g1 { width: 453px; }
.g2 { width: 294px; }
.g3 { width: 376px; }
.g4 { width: 303px; }
.g5 { width: 424px; }
.g6 { width: 169px; }
.g7 { width: 254px; }
.g8 { width: 136px; }
.gbody { height: 104px; flex: none; display: flex; align-items: flex-start; }
.g1 .gbody { padding-left: 18px; }
.g2 .gbody { padding-left: 10px; }
.g3 .gbody { padding: 10px 0 0 11px; }
.g4 .gbody { padding-left: 16px; }
.g5 .gbody { padding-left: 7px; }
.g6 .gbody { padding-left: 12px; }
.g7 .gbody { padding-left: 6px; }
.glabel { height: 20px; flex: none; line-height: 18px; font-size: 13.3px; text-align: center; color: #3a3a3a; position: relative; white-space: nowrap; }
.g1 .glabel, .g2 .glabel { padding-left: 3px; }
.gl-outline { padding-right: 22px; }
.launch { position: absolute; right: 3px; top: 5px; width: 12px; height: 12px; }
.big { flex: none; display: flex; flex-direction: column; align-items: center; padding-top: 6px; line-height: 22px; white-space: nowrap; }
.big > span { display: block; height: 22px; }
.big > svg.bi, .big > .sorticon { height: 38px; margin-bottom: 4px; flex: none; }
.big > svg.t3 { margin-top: 3px; height: 35px; }
.big.lo > svg.bi { margin-bottom: 6px; }
.w37 { width: 37px; }
.w34 { width: 34px; }
.w40 { width: 40px; }
.w43 { width: 43px; }
.w44 { width: 44px; }
.w38 { width: 38px; }
.w42 { width: 42px; }
.g1 .big > svg.bi, .g2 .big > svg.bi { height: 41px; margin-bottom: 1px; }
.g2 .big.lo > svg.bi { margin-bottom: 3px; }
.g8 .big > svg.bi { height: 43px; margin-top: -3px; margin-bottom: 2px; }
.w50 { width: 50px; }
.w60 { width: 60px; }
.w66 { width: 66px; }
.w74 { width: 74px; }
.w76 { width: 76px; }
.full { width: 100%; }
.ml4 { margin-left: 4px; }
.ml5 { margin-left: 5px; }
.ml6 { margin-left: 6px; }
.ml9 { margin-left: 9px; }
.ml11 { margin-left: 11px; }
.c177 { width: 177px; }
.c187 { width: 187px; }
.smalls { flex: none; display: grid; grid-auto-rows: 35px; margin-top: -3px; }
.si { display: flex; align-items: center; gap: 3px; white-space: nowrap; }
.si.off { color: #a8a8a8; }
.ic { width: 24px; height: 24px; flex: none; }
.cv { width: 10px; height: 6px; margin-left: 2px; vertical-align: middle; }
.cv.ml24 { margin-left: 24px; }
.dtypes { width: 350px; height: 80px; display: flex; border: 2px solid #d4d4d4; border-radius: 6px; margin-left: 1px; }
.dt { width: 106px; display: flex; flex-direction: column; align-items: center; white-space: nowrap; line-height: 22px; }
.dti { height: 34px; margin-top: 10px; margin-bottom: 5px; flex: none; }
.dt-more { width: 32px; margin-left: auto; margin-top: -2px; margin-bottom: -2px; margin-right: -2px; border: 2px solid #666; border-radius: 0 6px 6px 0; display: flex; align-items: center; justify-content: center; }
.down { width: 12px; height: 14px; }
.azs { width: 23px; flex: none; display: flex; flex-direction: column; gap: 19px; padding-top: 15px; }
.az { height: 23px; display: flex; gap: 1px; }
.azl { display: flex; flex-direction: column; font-family: Roboto, sans-serif; font-size: 12px; line-height: 12px; width: 11px; text-align: center; }
.azl b, .sc b { font-weight: 400; color: #1f7ac8; font-style: normal; }
.azl i, .sc i { font-style: normal; color: #333; }
.arrowd { width: 10px; height: 22px; }
.sorticon { width: 38px; display: flex; border: 2px solid #555; border-top: 7px solid #999; background: #fff; }
.sc { width: 50%; display: flex; flex-direction: column; align-items: center; font-size: 13px; line-height: 14px; padding-top: 1px; }
.sc:first-child { border-right: 1px solid #555; }
.vsep { width: 2px; height: 83px; background: #e3e3e3; margin: 8px 0 0 6px; flex: none; }
.collapse { position: absolute; right: 11px; top: 112px; width: 13px; height: 8px; }

/* formula bar */
.fbar { height: 28px; flex: none; margin: 11px 12px 10px 11px; display: flex; }
.namebox, .fxbox, .finput { background: #fff; border-radius: 4px; display: flex; align-items: center; }
.namebox { width: 525px; padding: 0 7px 0 5px; justify-content: space-between; font-size: 16.5px; }
.dots { width: 28px; display: flex; flex-direction: column; gap: 3px; align-items: center; justify-content: center; }
.dots i { width: 3px; height: 3px; background: #444; }
.fxbox { width: 112px; padding-left: 7px; gap: 10px; }
.fx-x { width: 18px; height: 18px; }
.fx-c { width: 22px; height: 19px; }
.fx { font-family: "Liberation Serif", serif; font-style: italic; font-weight: 700; font-size: 20px; margin-left: 5px; }
.nbc { width: 13px; height: 8px; }
.nbc2 { width: 12px; height: 7px; }
.finput { flex: 1; margin-left: 7px; justify-content: flex-end; padding-right: 7px; }

/* work */
.work { flex: 1; display: flex; min-height: 0; }
.sheet { width: 2533px; background: #fff; position: relative; font-family: Roboto, "Liberation Sans", sans-serif; color: #7f7f7f; font-size: 17.2px; overflow: hidden; }
.band { height: 53px; display: flex; border-bottom: 2px solid #e8eaed; position: relative; }
.band-col { flex: none; display: flex; flex-direction: column; }
.bc1 { width: 642px; margin-left: 1121px; }
.bc2 { width: 260px; }
.slicer { display: flex; width: 260px; height: 26px; margin-top: 1px; }
.sl-line { width: 235px; height: 6px; margin-top: 10px; border-top: 2px solid #a5a5a5; border-left: 2px solid #b5b5b5; }
.sl-handle { width: 25px; height: 25px; background: #e4e4e4; border: 1px solid #cfcfcf; border-radius: 2px; text-align: center; line-height: 22px; font-size: 14px; font-weight: 700; color: #444; }
.ticks { display: flex; margin-top: 9px; height: 3px; }
.ticks i { width: 2px; height: 2px; background: #bdbdbd; }
.t3v { padding-left: 45px; gap: 54px; }
.t2v { padding-left: 45px; gap: 99px; }
.greenbar { position: absolute; left: 1322px; bottom: -2px; width: 91px; height: 4px; background: #217346; }
.cols { display: flex; height: 1028px; border-left: 2px solid #eceef0; }
.col-left { width: 1117px; flex: none; }
.visible { width: 92px; margin: 25px 0 0 28px; }
.vis-box { height: 26px; background: #f2f2f2; border: 1px solid #6e6e6e; border-bottom-color: #404040; display: flex; align-items: center; justify-content: center; }
.vis-check { width: 19px; height: 19px; background: #c0c0c0; border-radius: 3px; display: block; }
.tick { width: 19px; height: 19px; display: block; }
.vis-label { text-align: center; color: #c8c8c8; font-size: 14px; line-height: 20px; margin-top: 3px; }
.title { margin: 4px 0 0 156px; font-family: "DejaVu Serif Condensed", "DejaVu Serif", "Liberation Serif", serif; font-size: 28.7px; font-weight: 700; line-height: 40px; color: #7f7f7f; white-space: nowrap; }
.actions-grid { margin: 101px 0 0 154px; display: grid; grid-template-columns: 292px 128px 113px 247px 43px; grid-auto-rows: 76px; align-items: center; justify-items: start; font-size: 17.5px; }
.blue { color: #0070c0; }
.txt { white-space: nowrap; }
.lk-o { width: 38px; height: 53px; }
.lk-c { width: 38px; height: 49px; }
.sy-a { width: 60px; height: 45px; margin-left: -11px; }
.sy-b { width: 43px; height: 42px; }
.sv { width: 40px; height: 40px; }
.form { margin: 50px 0 0 154px; display: grid; grid-template-columns: 190px 607px; grid-auto-rows: 27px; row-gap: 25px; align-items: center; font-size: 17.8px; }
.field { height: 27px; background: #f2f2f2; border: 2px solid #404040; border-top-color: #555; padding-left: 12px; line-height: 23px; white-space: nowrap; }
.col-mid { width: 642px; flex: none; }
.col-cap { font-style: italic; line-height: 24px; margin-top: 26px; text-align: center; font-size: 16.5px; }
.cap-user { width: 496px; }
.cap-vis { width: 496px; }
.heading { margin: 36px 0 0 5px; font-size: 22.7px; font-weight: 700; line-height: 30px; color: #7f7f7f; white-space: nowrap; }
.col-right .heading { margin-left: 4px; }
.sub { margin: 3px 0 0 5px; font-style: italic; color: #c8c8c8; line-height: 22px; font-size: 16.6px; white-space: nowrap; }
.list { display: flex; margin-top: 26px; }
.panel { width: 93px; height: 513px; flex: none; background: #f2f2f2; border: 2px solid #404040; padding-top: 11px; display: grid; grid-auto-rows: 51px; justify-items: center; align-items: center; align-content: start; }
.cb { width: 19px; height: 19px; border: 2px solid #00b050; border-radius: 3px; display: block; background: #f2f2f2; }
.cb.on { background: #00b050; border: 0; }
.labels { margin-left: 23px; padding-top: 13px; display: grid; grid-auto-rows: 51px; align-items: center; white-space: nowrap; align-self: flex-start; }
.labels.lr { margin-left: 12px; }
.col-right { flex: 1; display: flex; }
.col-right-main { width: 403px; flex: none; }
.macro { width: 93px; margin-top: 22px; display: flex; flex-direction: column; align-items: center; }
.eye { width: 42px; height: 24px; filter: drop-shadow(0 3px 2px rgba(0,0,0,.28)); }
.macro-label { margin-top: 8px; font-size: 14px; line-height: 18px; color: #c8c8c8; }
.logo { display: flex; gap: 7px; margin-top: 83px; height: 62px; align-items: flex-start; }
.logo-mark { width: 64px; height: 62px; flex: none; }
.logo-text { width: 242px; }
.logo-name { font-family: "Open Sans", sans-serif; font-weight: 700; font-size: 35px; line-height: 38px; margin-top: 3px; color: #1b75bc; white-space: nowrap; border-bottom: 3px solid #a3a3a3; height: 40px; letter-spacing: -.5px; }
.amp { color: #a3a3a3; }
.logo-sub { font-family: Roboto, sans-serif; font-weight: 500; font-size: 15px; line-height: 20px; margin-top: 4px; color: #a3a3a3; white-space: nowrap; }
.active-cell { position: absolute; left: 1320px; top: 883px; width: 94px; height: 29px; border: 2px solid #217346; }
.active-cell::after { content: ""; position: absolute; right: -3px; bottom: -3px; width: 5px; height: 5px; background: #217346; }
.faint { position: absolute; left: 990px; width: 110px; text-align: center; font-size: 12px; color: #eaeaea; white-space: nowrap; }
.f1 { top: 1005px; }
.f2 { top: 1056px; }

/* vertical scroll */
.vscroll { flex: 1; display: flex; flex-direction: column; align-items: center; margin: 0 3px 0 2px; background: #f3f4f6; border-radius: 10px; padding: 6px 0; }
.vthumb { width: 10px; height: 854px; background: #737373; border-radius: 3px; margin-top: 5px; }
.varrow { width: 0; height: 0; border-left: 5px solid transparent; border-right: 5px solid transparent; }
.up { border-bottom: 9px solid #6a6a6a; }
.dn { border-top: 9px solid #6a6a6a; margin-top: auto; }

/* tab bar */
.tabbar { height: 43px; flex: none; display: flex; align-items: flex-start; background: #e5e7eb; }
.tabnav { width: 140px; flex: none; display: flex; gap: 33px; padding: 11px 0 0 28px; }
.nav { width: 10px; height: 18px; }
.tabs { display: grid; grid-template-columns: 80px 102px 139px 138px 96px 71px 116px 97px 105px; height: 38px; font-size: 17.5px; }
.stab { position: relative; text-align: center; line-height: 45px; height: 38px; white-space: nowrap; }
.stab::after { content: ""; position: absolute; right: 0; top: 11px; height: 25px; width: 1px; background: #c6c8cc; }
.sel { background: #fff; margin: 0 5px 0 6px; border-radius: 0 0 4px 4px; box-shadow: 0 1px 2px rgba(0,0,0,.12); font-weight: 600; line-height: 38px; }
.sel::after { display: none; }
.seltext { display: block; width: 69px; margin: 0 auto; height: 32px; border-bottom: 3px solid #107c41; line-height: 36px; }
.chip { display: block; margin: 5px 5px 0 7px; height: 33px; line-height: 35px; border-radius: 5px; }
.pink { background: #f2cdec; }
.green { background: #8fdc78; margin: 5px 5px 0 4px; }
.plus { width: 30px; margin-left: 49px; text-align: center; font-size: 27px; line-height: 36px; color: #444; font-weight: 300; }
.dots-h { margin-left: 372px; height: 38px; width: 14px; padding-top: 4px; }
.hscroll { margin-left: 15px; margin-top: 9px; width: 972px; height: 23px; background: #f3f4f6; border-radius: 10px; display: flex; align-items: center; padding: 0 8px; }
.hthumb { width: 870px; height: 12px; border-radius: 6px; background: #737373; margin-left: 9px; }
.harrow { width: 0; height: 0; border-top: 6px solid transparent; border-bottom: 6px solid transparent; }
.harrow.l { border-right: 6px solid #5c5c5c; }
.harrow.r { border-left: 6px solid #5c5c5c; margin-left: auto; }

/* status */
.status { height: 30px; flex: none; background: #f3f3f3; border-top: 1px solid #fff; display: flex; justify-content: space-between; align-items: center; padding-left: 15px; font-size: 13.3px; }
.status-right { display: flex; align-items: center; height: 100%; padding-right: 10px; }
.view { width: 53px; height: 100%; display: flex; align-items: center; justify-content: center; }
.view.on { background: #e1e1e1; width: 52px; }
.vw { width: 18px; height: 18px; }
.zm { width: 12px; text-align: center; color: #999; font-size: 16px; margin-left: 8px; }
.zm.p { margin-left: 6px; }
.zoomline { width: 131px; height: 2px; background: #666; margin: 0 1px 0 7px; position: relative; }
.zoomline i { position: absolute; left: 63px; top: -7px; width: 6px; height: 16px; background: #666; }
.zpct { margin-left: 18px; }
```
